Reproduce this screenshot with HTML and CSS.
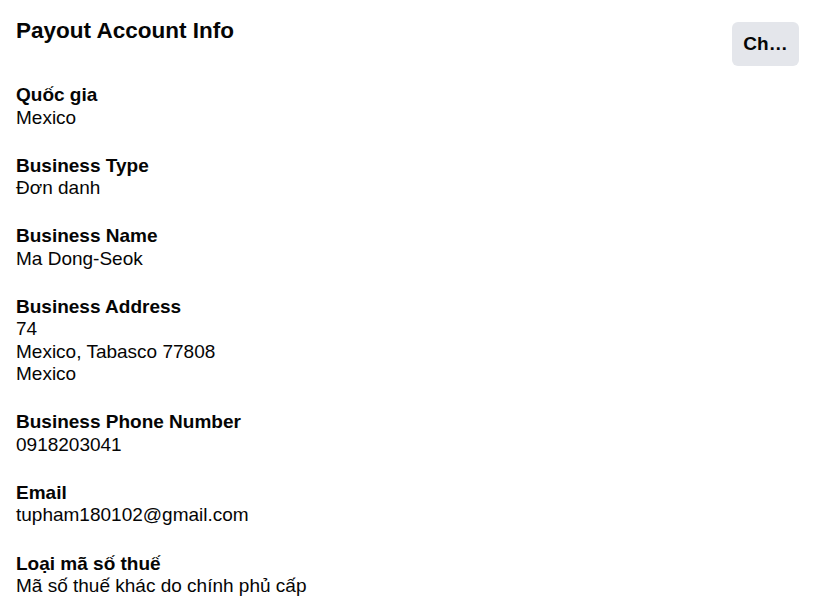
FILE: index.html
```html
<!DOCTYPE html>
<html>
<head>
<meta charset="utf-8">
<link rel="stylesheet" href="styles.css">
</head>
<body>
<div class="card">
  <div class="header">
    <h1 class="title">Payout Account Info</h1>
    <button class="btn">Ch…</button>
  </div>
  <div class="fields">
    <div class="field">
      <div class="label">Quốc gia</div>
      <div class="value">Mexico</div>
    </div>
    <div class="field">
      <div class="label">Business Type</div>
      <div class="value">Đơn danh</div>
    </div>
    <div class="field">
      <div class="label">Business Name</div>
      <div class="value">Ma Dong-Seok</div>
    </div>
    <div class="field">
      <div class="label">Business Address</div>
      <div class="value">74</div>
      <div class="value">Mexico, Tabasco 77808</div>
      <div class="value">Mexico</div>
    </div>
    <div class="field">
      <div class="label">Business Phone Number</div>
      <div class="value">0918203041</div>
    </div>
    <div class="field">
      <div class="label">Email</div>
      <div class="value">tupham180102@gmail.com</div>
    </div>
    <div class="field">
      <div class="label">Loại mã số thuế</div>
      <div class="value">Mã số thuế khác do chính phủ cấp</div>
    </div>
  </div>
</div>
</body>
</html>
```

FILE: styles.css
```css
html, body {
  margin: 0;
  padding: 0;
  background: #ffffff;
}
body {
  font-family: "Liberation Sans", Arial, sans-serif;
  color: #050505;
}
.card {
  background: #fff;
  border-radius: 8px;
  padding: 16px 18px 16px 16px;
  height: 616px;
  box-sizing: border-box;
}
.header {
  display: flex;
  justify-content: space-between;
  align-items: flex-start;
}
.title {
  margin: 0;
  font-size: 22.5px;
  line-height: 29px;
  font-weight: bold;
}
.btn {
  margin-top: 6px;
  width: 67px;
  height: 44px;
  border: none;
  border-radius: 6px;
  background: #e4e6eb;
  font-family: "Liberation Sans", Arial, sans-serif;
  font-weight: bold;
  font-size: 19px;
  color: #050505;
  padding: 0;
}
.fields {
  display: flex;
  flex-direction: column;
  gap: 25.6px;
  margin-top: 18px;
}
.label {
  font-weight: bold;
  font-size: 19px;
  line-height: 22.5px;
}
.value {
  font-size: 19px;
  line-height: 22.5px;
}
```
